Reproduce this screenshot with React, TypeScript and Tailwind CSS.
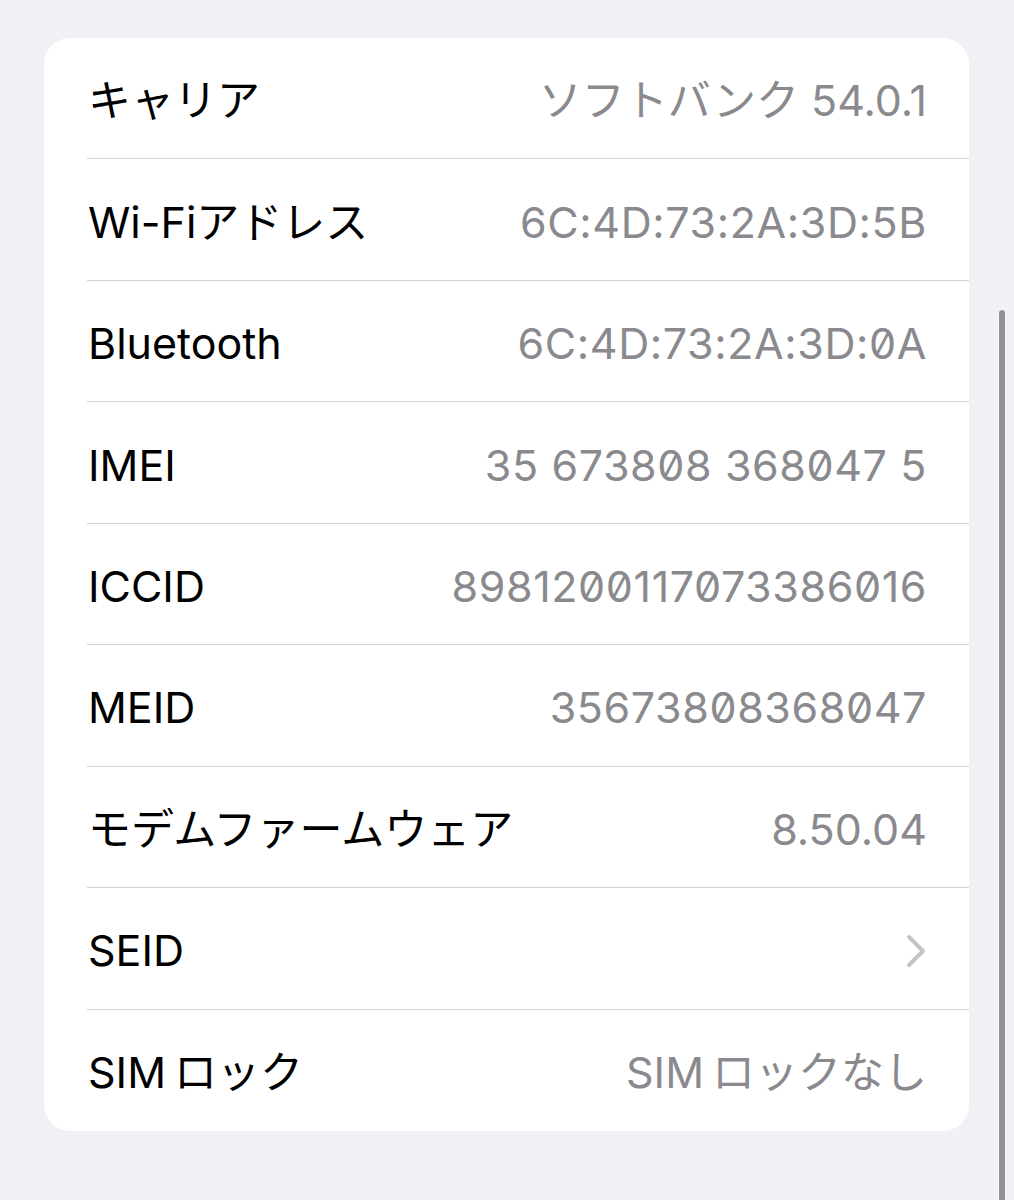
const rows: { label: string; value?: string; mono?: boolean; chevron?: boolean }[] = [
  { label: "キャリア", value: "ソフトバンク 54.0.1" },
  { label: "Wi-Fiアドレス", value: "6C:4D:73:2A:3D:5B", mono: true },
  { label: "Bluetooth", value: "6C:4D:73:2A:3D:0A", mono: true },
  { label: "IMEI", value: "35 673808 368047 5", mono: true },
  { label: "ICCID", value: "8981200117073386016", mono: true },
  { label: "MEID", value: "35673808368047", mono: true },
  { label: "モデムファームウェア", value: "8.50.04" },
  { label: "SEID", chevron: true },
  { label: "SIMロック", value: "SIMロックなし" },
]

// Hiragino leaves a little air between "SIM" and the katakana that follows
function Text({ text }: { text: string }) {
  if (!text.startsWith("SIM")) return <>{text}</>
  return (
    <>
      <span className="mr-[8px]">SIM</span>
      {text.slice(3)}
    </>
  )
}

function Row({ row, last }: { row: (typeof rows)[number]; last: boolean }) {
  return (
    <div className="h-[121.44px] pl-[43px]">
      <div
        className={`flex h-full items-center justify-between pr-[42px] pt-[5px] ${
          last ? "" : "border-b border-[#d4d4d8]"
        }`}
      >
        <span className="pl-[1px] text-black">
          <Text text={row.label} />
        </span>
        {row.chevron ? (
          <svg width="20" height="34" viewBox="0 0 20 34" className="mr-[1px]">
            <path
              d="M3 3 L17 17 L3 31"
              fill="none"
              stroke="#c4c4c7"
              strokeWidth="4"
              strokeLinecap="round"
              strokeLinejoin="round"
            />
          </svg>
        ) : (
          <span className={`text-[#8a8a8e] ${row.mono ? "slashed-zero tracking-[0.6px]" : ""}`}>
            <Text text={row.value ?? ""} />
          </span>
        )}
      </div>
    </div>
  )
}

export default function App() {
  return (
    <main
      className="relative h-[1200px] w-[1014px] overflow-hidden bg-[#f0f0f5] pt-[38px] text-[43px] leading-none"
      style={{ fontFamily: 'Inter, "Noto Sans CJK JP", sans-serif' }}
    >
      <div className="ml-[44px] w-[925px] overflow-hidden rounded-[26px] bg-white">
        {rows.map((row, i) => (
          <Row key={row.label} row={row} last={i === rows.length - 1} />
        ))}
      </div>

      {/* scroll indicator */}
      <div className="absolute left-[999px] top-[310px] h-[900px] w-[6px] rounded-full bg-[#909096] ring-1 ring-white/70" />
    </main>
  )
}
